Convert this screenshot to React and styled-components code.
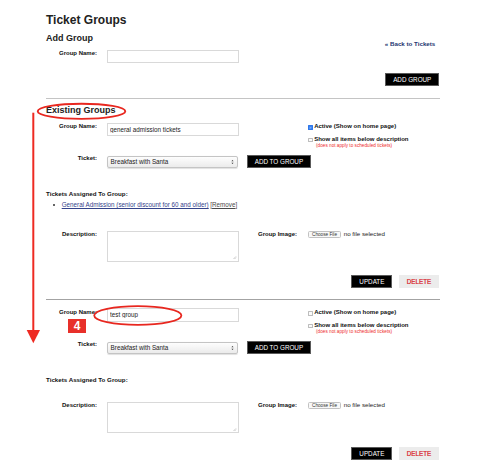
import React from 'react';
import styled, { createGlobalStyle } from 'styled-components';

const GlobalStyle = createGlobalStyle`
  html, body { margin: 0; padding: 0; background: #fff; }
  body { font-family: "Liberation Sans", Arial, sans-serif; color: #1c1c1c; }
  * { box-sizing: border-box; }
`;

const FONT = `"Liberation Sans", Arial, sans-serif`;

const Page = styled.div`
  position: relative;
  width: 500px;
  height: 466px;
  overflow: hidden;
  padding: 12.5px 60px 0 46px;
`;

const Title = styled.h1`
  margin: 0;
  font-size: 12px;
  line-height: 14px;
  font-weight: 700;
  color: #222;
`;

const SectionHead = styled.div`
  display: flex;
  justify-content: space-between;
  align-items: flex-start;
  height: 11px;
  margin-top: ${(p) => p.$mt}px;
`;

const SectionTitle = styled.h2`
  margin: 0;
  font-size: 9px;
  line-height: 11px;
  font-weight: 700;
  color: #222;
`;

const BackLink = styled.a`
  margin: 7.4px 4.7px 0 0;
  font-size: 6.2px;
  line-height: 8px;
  font-weight: 700;
  color: #243570;
  text-decoration: none;
  white-space: nowrap;
`;

const FormRow = styled.div`
  display: grid;
  grid-template-columns: 51px 142px 69px 132px;
  align-items: start;
  margin-top: ${(p) => p.$mt}px;
`;

const Label = styled.div`
  font-size: 6px;
  line-height: 8px;
  font-weight: 700;
  text-align: right;
  color: #111;
  white-space: nowrap;
  padding-right: ${(p) => p.$pr || 0}px;
`;

const Field = styled.div`
  padding-left: ${(p) => (p.$pl === undefined ? 10 : p.$pl)}px;
  grid-column: ${(p) => p.$col || 'auto'};
`;

const TextInput = styled.input`
  display: block;
  width: 131.5px;
  height: 13.2px;
  margin: ${(p) => p.$mt || 0}px 0 0;
  padding: 0 2px;
  border: 1px solid #d9d9d9;
  background: #fff;
  font-family: ${FONT};
  font-size: 6.3px;
  color: #222;
  outline: none;
`;

const SelectBox = styled.div`
  display: flex;
  align-items: center;
  justify-content: space-between;
  width: 131px;
  height: 12.4px;
  margin-top: ${(p) => p.$mt || 0}px;
  padding: 0 2.6px 0 2.6px;
  border: 1px solid #c4c4c4;
  border-radius: 2px;
  background: linear-gradient(#fdfdfd, #ebebeb);
  box-shadow: 0 0.5px 0.8px rgba(0, 0, 0, 0.12);
  font-size: 6.3px;
  color: #222;
  white-space: nowrap;
`;

const Button = styled.button`
  display: block;
  height: 13px;
  margin-top: ${(p) => p.$mt || 0}px;
  padding: 0 7px;
  border: 1px solid ${(p) => (p.$light ? '#ececec' : '#5a5a5a')};
  border-radius: 0;
  background: ${(p) => (p.$light ? '#ececec' : '#000')};
  color: ${(p) => (p.$light ? '#d8222a' : '#fff')};
  -webkit-text-stroke: ${(p) => (p.$light ? '0.2px #d8222a' : '0')};
  font-family: ${FONT};
  font-size: 6.3px;
  line-height: 11px;
  white-space: nowrap;
  cursor: pointer;
`;

const RightBar = styled.div`
  display: flex;
  justify-content: flex-end;
  gap: 6.4px;
  padding-right: 0.7px;
  margin-top: ${(p) => p.$mt}px;
`;

const Divider = styled.div`
  height: 1px;
  margin-top: ${(p) => p.$mt}px;
  background: ${(p) => p.$tone};
`;

const CheckList = styled.div`
  display: flex;
  flex-direction: column;
`;

const CheckItem = styled.label`
  display: flex;
  align-items: flex-start;
  gap: 1.6px;
  margin-top: ${(p) => p.$mt || 0}px;
  font-size: 6px;
  line-height: 8px;
  font-weight: 700;
  color: #111;
  white-space: nowrap;
`;

const Box = styled.span`
  display: flex;
  align-items: center;
  justify-content: center;
  flex-shrink: 0;
  width: 4.6px;
  height: 4.6px;
  margin-top: 3px;
  border-radius: 0.6px;
  border: 0.6px solid ${(p) => (p.$checked ? '#2f76e8' : '#bdbdbd')};
  background: ${(p) => (p.$checked ? '#3a85f5' : '#fbfbfb')};
`;

const Note = styled.div`
  margin-left: 8px;
  font-size: 4.7px;
  line-height: 6px;
  color: #ee2b2b;
  white-space: nowrap;
`;

const SubHeading = styled.div`
  margin-top: ${(p) => p.$mt}px;
  font-size: 6.2px;
  line-height: 8px;
  font-weight: 700;
  color: #111;
`;

const TicketList = styled.ul`
  margin: 3.6px 0 0;
  padding: 0;
  list-style: none;
`;

const TicketItem = styled.li`
  display: flex;
  align-items: center;
  padding-left: 7.3px;
  font-size: 6.3px;
  line-height: 8px;
  white-space: nowrap;
  &::before {
    content: '';
    width: 2px;
    height: 2px;
    margin-right: 6.4px;
    border-radius: 50%;
    background: #333;
  }
`;

const TicketLink = styled.a`
  color: #34438a;
  text-decoration: underline;
  margin-right: 1.6px;
`;

const RemoveText = styled.span`
  color: #4a4a4a;
  & > a {
    color: #4a4a4a;
    text-decoration: underline;
  }
`;

const DescBox = styled.div`
  display: flex;
  align-items: flex-end;
  justify-content: flex-end;
  width: 131.5px;
  height: 31px;
  margin-top: ${(p) => p.$mt || 0}px;
  padding: 1px;
  border: 1px solid #d9d9d9;
  background: #fff;
`;

const FileField = styled.div`
  display: flex;
  align-items: flex-start;
  gap: 2.7px;
`;

const ChooseButton = styled.span`
  display: flex;
  align-items: center;
  height: 7px;
  margin-top: 0.8px;
  padding: 0 3px;
  border: 0.6px solid #c2c2c2;
  border-radius: 1.5px;
  background: #f8f8f8;
  font-size: 4.7px;
  color: #333;
  white-space: nowrap;
`;

const FileText = styled.span`
  font-size: 6.2px;
  line-height: 8px;
  color: #1c1c1c;
  white-space: nowrap;
`;

const Overlay = styled.svg`
  position: absolute;
  left: 0;
  top: 0;
  width: 500px;
  height: 466px;
  pointer-events: none;
`;

const Badge = styled.div`
  position: absolute;
  left: 68.3px;
  top: 319.3px;
  width: 17.7px;
  height: 14px;
  display: flex;
  align-items: center;
  justify-content: center;
  background: #e8302a;
  color: #fff;
  font-size: 12px;
  font-weight: 700;
  line-height: 14px;
`;

const SelectArrows = () => (
  <svg width="3" height="6" viewBox="0 0 3 6">
    <path d="M0.4 2.3 L1.5 1 L2.6 2.3 Z M0.4 3.7 L1.5 5 L2.6 3.7 Z" fill="#333" />
  </svg>
);

const Grip = () => (
  <svg width="3.2" height="3.2" viewBox="0 0 4 4">
    <path d="M0.5 3.8 L3.8 0.5 M2 3.8 L3.8 2" stroke="#8a8a8a" strokeWidth="0.5" />
  </svg>
);

const Check = () => (
  <svg width="3.4" height="3.4" viewBox="0 0 4 4">
    <path d="M0.8 2.1 L1.7 3 L3.3 1" stroke="#fff" strokeWidth="0.7" fill="none" />
  </svg>
);

const GroupEditor = ({ g }) => (
  <>
    <FormRow $mt={g.rowA}>
      <Label>Group Name:</Label>
      <Field>
        <TextInput defaultValue={g.name} $mt={g.inputMt} />
      </Field>
      <div />
      <CheckList>
        <CheckItem>
          <Box $checked={g.active}>{g.active && <Check />}</Box>
          Active (Show on home page)
        </CheckItem>
        <CheckItem $mt={4.6}>
          <Box />
          Show all items below description
        </CheckItem>
        <Note>(does not apply to scheduled tickets)</Note>
      </CheckList>
    </FormRow>
    <FormRow $mt={g.rowB}>
      <Label>Ticket:</Label>
      <Field>
        <SelectBox $mt={1.6}>
          <span>Breakfast with Santa</span>
          <SelectArrows />
        </SelectBox>
      </Field>
      <Field $col="3 / 5" $pl={7.7}>
        <Button $mt={0.9}>ADD TO GROUP</Button>
      </Field>
    </FormRow>
    <SubHeading $mt={g.sub}>Tickets Assigned To Group:</SubHeading>
    {g.tickets.length > 0 && (
      <TicketList>
        {g.tickets.map((t) => (
          <TicketItem key={t}>
            <TicketLink>{t}</TicketLink>
            <RemoveText>
              [<a>Remove</a>]
            </RemoveText>
          </TicketItem>
        ))}
      </TicketList>
    )}
    <FormRow $mt={g.desc}>
      <Label>Description:</Label>
      <Field>
        <DescBox $mt={g.descMt}>
          <Grip />
        </DescBox>
      </Field>
      <Label $pr={11}>Group Image:</Label>
      <FileField>
        <ChooseButton>Choose File</ChooseButton>
        <FileText>no file selected</FileText>
      </FileField>
    </FormRow>
    <RightBar $mt={13.3}>
      <Button>UPDATE</Button>
      <Button $light>DELETE</Button>
    </RightBar>
  </>
);

const groups = [
  {
    name: 'general admission tickets',
    active: true,
    rowA: 5.9,
    inputMt: 1.1,
    rowB: 5.4,
    sub: 21.8,
    tickets: ['General Admission (senior discount for 60 and older)'],
    desc: 20.3,
    descMt: 0.8,
  },
  {
    name: 'test group',
    active: false,
    rowA: 8.2,
    inputMt: 0.1,
    rowB: 5.1,
    sub: 22.2,
    tickets: [],
    desc: 16.9,
    descMt: 1.4,
  },
];

export default function App() {
  return (
    <>
      <GlobalStyle />
      <Page>
        <Title>Ticket Groups</Title>
        <SectionHead $mt={6.3}>
          <SectionTitle>Add Group</SectionTitle>
          <BackLink>« Back to Tickets</BackLink>
        </SectionHead>
        <FormRow $mt={5.1}>
          <Label>Group Name:</Label>
          <Field>
            <TextInput defaultValue="" $mt={1.1} />
          </Field>
        </FormRow>
        <RightBar $mt={10}>
          <Button>ADD GROUP</Button>
        </RightBar>
        <Divider $mt={11.7} $tone="#c4c4c4" />
        <SectionHead $mt={6.3}>
          <SectionTitle>Existing Groups</SectionTitle>
        </SectionHead>
        <GroupEditor g={groups[0]} />
        <Divider $mt={11.3} $tone="#a3a3a3" />
        <GroupEditor g={groups[1]} />

        <Overlay viewBox="0 0 500 466">
          <ellipse cx="81.5" cy="111.3" rx="43.8" ry="7.6" fill="none" stroke="#e8271f" strokeWidth="1.9" />
          <ellipse cx="137.8" cy="315.5" rx="43.6" ry="9.4" fill="none" stroke="#e8271f" strokeWidth="1.8" />
          <line x1="33.3" y1="112.7" x2="33.3" y2="332" stroke="#ee2a22" strokeWidth="2" />
          <polygon points="26.7,330 40,330 33.3,343.3" fill="#ee2a22" />
        </Overlay>
        <Badge>4</Badge>
      </Page>
    </>
  );
}
